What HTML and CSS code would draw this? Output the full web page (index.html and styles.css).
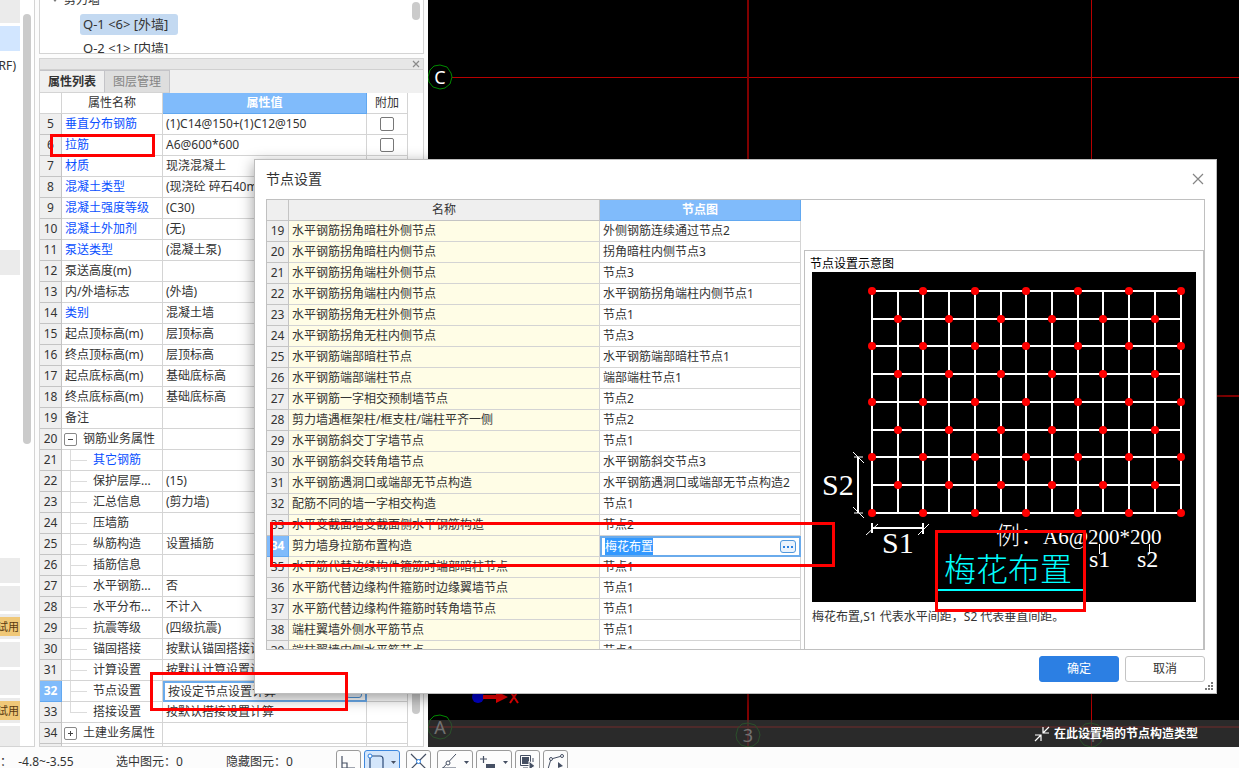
FILE: index.html
```
<!DOCTYPE html>
<html lang="zh-CN">
<head>
<meta charset="utf-8">
<title>节点设置</title>
<link rel="stylesheet" href="styles.css">
</head>
<body>
<div class="app">
  <main class="workspace">
    <aside class="strip">
      <div class="strip-list">
        <span class="block block-head"></span>
        <span class="block block-active"></span>
        <span class="strip-text">RF)</span>
        <span class="block block-mid"></span>
        <div class="strip-bottom">
          <span class="block"></span>
          <span class="block"></span>
          <span class="block"><b class="trial">试用</b></span>
          <span class="block"></span>
          <span class="block"></span>
          <span class="block"><b class="trial">试用</b></span>
          <span class="block"></span>
        </div>
      </div>
      <div class="thumb strip-thumb"></div>
    </aside>

    <section class="side">
      <div class="tree">
        <ul class="tree-list">
          <li class="tree-root"><span class="caret"></span>剪力墙</li>
          <li class="tree-leaf"><span class="chosen">Q-1 &lt;6&gt; [外墙]</span></li>
          <li class="tree-leaf"><span>Q-2 &lt;1&gt; [内墙]</span></li>
        </ul>
        <div class="thumb tree-thumb"></div>
      </div>
      <div class="props">
        <div class="props-bar">
          <button class="bar-close" type="button" aria-label="关闭"><svg width="8" height="8" viewBox="0 0 8 8"><path d="M1 1L7 7M7 1L1 7" stroke="#8a8a8a" stroke-width="1.2"/></svg></button>
        </div>
        <div class="tabs">
          <button class="tab tab-on" type="button">属性列表</button><button class="tab" type="button">图层管理</button>
        </div>
        <div class="grid-wrap">
          <table class="grid">
            <colgroup><col class="c-num"><col class="c-name"><col class="c-val"><col class="c-add"></colgroup>
            <thead><tr><th></th><th>属性名称</th><th class="hot">属性值</th><th>附加</th></tr></thead>
            <tbody id="props-body"></tbody>
          </table>
          <div class="thumb grid-thumb"></div>
        </div>
      </div>
    </section>

    <section class="canvas">
      <svg class="drawing" width="100%" height="100%">
        <g stroke-width="1" shape-rendering="crispEdges">
          <path stroke="#b80000" d="M663.500 0V747M24 77.500H1400"/>
          <path stroke="#800000" stroke-width="2" d="M320 0V747M0 396H1400M0 727H1400"/>
        </g>
        <g fill="none" stroke="#008a00" stroke-width="1">
          <path id="bubble" d="M12 65L19 67L23 73L24 77L22 84L17 88L12 89L5 87L1 82L0 77L2 70L6 66Z"/>
          <use href="#bubble" y="650"/>
          <use href="#bubble" x="308" y="658"/>
          <use href="#bubble" x="651" y="658"/>
        </g>
        <g class="axis" text-anchor="middle">
          <text x="12" y="84">C</text>
          <text x="12" y="734">A</text>
          <text x="320" y="742">3</text>
          <text x="663" y="742">4</text>
        </g>
        <circle cx="50" cy="697" r="6" fill="#0000c8"/>
        <path d="M55 695H68V691L80 697L68 703V699H55Z" fill="#f00000"/>
        <path d="M82 691L90 703M90 691L82 703" stroke="#f00000" stroke-width="2"/>
      </svg>
      <div class="hint">
        <svg width="16" height="16" viewBox="0 0 16 16" fill="none" stroke="#fff" stroke-width="1.200"><path d="M15 1L9 7M9 1V7H15M1 15L7 9M1 9H7V15"/></svg>
        <span>在此设置墙的节点构造类型</span>
      </div>
    </section>
  </main>

  <footer class="status">
    <span class="s-level">：&nbsp; -4.8~-3.55</span>
    <span class="s-sel">选中图元：0</span>
    <span class="s-hid">隐藏图元：0</span>
    <div class="tools">
      <div class="tool-group">
        <button type="button" class="tool" aria-label="正交"><svg width="23" height="24" viewBox="0 0 23 24"><path d="M5 5V17H18M5 12H10V17" fill="none" stroke="#454f63" stroke-width="1.200"/></svg></button>
        <button type="button" class="tool wide on" aria-label="捕捉"><svg width="34" height="24" viewBox="0 0 34 24"><path d="M5 7V18M7 5H15Q18 5 18 8V18" fill="none" stroke="#2b4a78" stroke-width="1.200"/><circle cx="5" cy="5" r="2" fill="#fff" stroke="#2a7fe0"/><path d="M26 10H31L28.500 13Z" fill="#454f63"/></svg></button>
      </div>
      <button type="button" class="tool" aria-label="交点"><svg width="23" height="24" viewBox="0 0 23 24"><path d="M4 3L19 18M19 3L4 18" stroke="#454f63" stroke-width="1.200"/><circle cx="11.500" cy="10.500" r="2" fill="#fff" stroke="#2a7fe0"/></svg></button>
      <div class="tool-group">
        <button type="button" class="tool wide" aria-label="角度"><svg width="34" height="24" viewBox="0 0 34 24"><path d="M4 18L18 3M4 17H18" stroke="#454f63"/><circle cx="10" cy="12" r="2" fill="#fff" stroke="#454f63"/><path d="M26 10H31L28.500 13Z" fill="#454f63"/></svg></button>
        <button type="button" class="tool wide" aria-label="偏移"><svg width="34" height="24" viewBox="0 0 34 24"><path d="M3 8H10M6.500 5V12" stroke="#454f63" stroke-width="1.200"/><path d="M9 13H18V18H9Z" fill="#454f63"/><path d="M26 10H31L28.500 13Z" fill="#454f63"/></svg></button>
        <button type="button" class="tool" aria-label="选择"><svg width="23" height="24" viewBox="0 0 23 24"><path d="M4.500 4.500H14.500V14.500H4.500Z" fill="none" stroke="#454f63"/><path d="M6 6H13V13H6Z" fill="#454f63"/><path d="M7 17H12M17 7V11" fill="none" stroke="#454f63"/><path d="M13 10L19 15L13 19Z" fill="#454f63" stroke="#fff"/></svg></button>
        <button type="button" class="tool" aria-label="折线"><svg width="23" height="24" viewBox="0 0 23 24"><path d="M4 18L7 8L18 5" fill="none" stroke="#454f63"/><circle cx="7" cy="8" r="1.500" fill="#fff" stroke="#454f63"/><circle cx="18" cy="5" r="1.500" fill="#fff" stroke="#454f63"/><path d="M14 11L19 15L14 17Z" fill="#454f63"/></svg></button>
      </div>
    </div>
  </footer>
</div>

<div class="dialog" role="dialog" aria-labelledby="dlg-title">
  <header class="dlg-head">
    <h1 id="dlg-title">节点设置</h1>
    <button class="dlg-close" type="button" aria-label="关闭"><svg width="12" height="12" viewBox="0 0 12 12"><path d="M1 1L11 11M11 1L1 11" stroke="#858585" stroke-width="1.200"/></svg></button>
  </header>
  <div class="dlg-body">
    <div class="node-wrap">
      <table class="grid nodes">
        <colgroup><col class="c-num"><col class="n-name"><col class="n-val"></colgroup>
        <thead><tr><th></th><th>名称</th><th class="hot">节点图</th></tr></thead>
        <tbody id="nodes-body"></tbody>
      </table>
    </div>
    <div class="preview">
      <figure class="figure">
        <figcaption>节点设置示意图</figcaption>
        <svg class="plan" id="plan" width="384" height="330" viewBox="0 0 384 330">
          <rect width="384" height="330" fill="#000"/>
          <g id="plan-grid" stroke="#fff" stroke-width="2"></g>
          <g id="plan-dots" fill="#f00"></g>
          <g stroke="#fff" fill="none">
            <path d="M46 185V241M60 256H112M60 251V261M111 251V262" stroke-width="2"/>
            <path d="M41 180L52 191M42 185H51M41 235L52 246M42 241H51M54 263L66 252M106 263L117 252M287.500 272V282M337.500 272V282"/>
          </g>
          <g class="cad" fill="#fff">
            <text class="cad-l" x="10" y="223">S2</text>
            <text class="cad-l" x="70" y="281">S1</text>
            <text class="cad-m" x="184" y="272">例：</text>
            <text class="cad-s" x="231" y="272">A6@200*200</text>
            <text class="cad-m" x="277" y="295">s1</text>
            <text class="cad-m" x="325" y="295">s2</text>
          </g>
          <text class="cad-title" x="132" y="309" fill="#0ff">梅花布置</text>
          <path d="M124 318H272" stroke="#0ff" stroke-width="2"/>
        </svg>
        <p class="note">梅花布置,S1 代表水平间距，S2 代表垂直间距。</p>
      </figure>
    </div>
  </div>
  <footer class="dlg-foot">
    <button class="btn primary" type="button">确定</button>
    <button class="btn" type="button">取消</button>
  </footer>
  <svg class="grip" width="8" height="8" viewBox="0 0 8 8" fill="#777"><path d="M6 0h2v2h-2zM3 3h2v2h-2zM6 3h2v2h-2zM0 6h2v2h-2zM3 6h2v2h-2zM6 6h2v2h-2z"/></svg>
</div>

<div class="mark mark-name"></div>
<div class="mark mark-value"></div>
<div class="mark mark-node"></div>
<div class="mark mark-title"></div>
<script src="app.js"></script>
</body>
</html>
```

FILE: styles.css
```
* { box-sizing: border-box; }

html, body { height: 100%; }

body {
  margin: 0;
  overflow: hidden;
  position: relative;
  background: #fcfcfc;
  color: #333;
  font: 12px/20px "Noto Sans", "Noto Sans CJK SC", sans-serif;
}

button, input { font: inherit; color: inherit; }

.app { display: flex; flex-direction: column; height: 100%; }
.workspace { flex: 1; min-height: 0; display: flex; gap: 4px; }

/* left strip */
.strip {
  width: 35px;
  display: flex;
  gap: 3px;
  background: #fff;
  border-right: 1px solid #d4d4d4;
  border-bottom: 1px solid #d4d4d4;
}
.strip-list { width: 20px; display: flex; flex-direction: column; overflow: hidden; }
.block { flex: none; display: flex; align-items: center; justify-content: flex-end; height: 25px; background: #ebebeb; }
.block-head { height: 23px; margin-bottom: 3px; }
.block-active { background: #d2e6ff; }
.strip-text { margin-top: 5px; width: 16px; height: 20px; display: flex; justify-content: flex-end; }
.block-mid { margin-top: 174px; }
.strip-bottom { margin-top: auto; height: 188px; flex: none; display: flex; flex-direction: column; gap: 3px; overflow: hidden; }
.trial { flex: none; padding-right: 1px; background: #f0c878; color: #5a3a10; font-size: 11px; font-weight: 400; line-height: 19px; }
.thumb { background: #cbcbcb; border-radius: 4px; }
.strip-thumb { width: 8px; height: 430px; margin-top: 14px; }

/* side panels */
.side { width: 385px; display: flex; flex-direction: column; gap: 4px; }
.tree {
  flex: none;
  height: 54px;
  display: flex;
  align-items: flex-start;
  justify-content: space-between;
  overflow: hidden;
  background: #fff;
  border: 1px solid #d4d4d4;
  border-top: 0;
}
.tree-list { list-style: none; margin: -12px 0 0; padding: 0; line-height: 24px; }
.tree-root { display: flex; align-items: center; gap: 6px; padding-left: 12px; }
.caret { border: 3px solid transparent; border-top: 4px solid #777; border-bottom: 0; }
.tree-leaf { padding-left: 40px; height: 24px; display: flex; align-items: center; font-size: 13px; }
.tree-leaf span { padding: 0 10px 0 3px; line-height: 21px; border-radius: 3px; }
.tree-leaf .chosen { background: #c3d9f1; }
.tree-thumb { width: 8px; height: 18px; margin: 2px 3px 0 0; }

.props { flex: 1; min-height: 0; display: flex; flex-direction: column; background: #fff; border: 1px solid #d4d4d4; }
.props-bar { flex: none; height: 11px; background: #e7e7e7; border-bottom: 1px solid #d0d0d0; display: flex; align-items: center; justify-content: flex-end; padding-right: 3px; }
.bar-close { display: flex; border: 0; padding: 0; background: none; }
.tabs { flex: none; height: 23px; display: flex; background: #f0f0f0; }
.tab { width: 65px; padding: 0; border: 1px solid #c4c4c8; border-left: 0; border-bottom-color: #d4d4d4; background: #dedede; color: #858585; line-height: 20px; }
.tab-on { background: #f0f0f0; color: #333; font-weight: 700; }

.grid-wrap { flex: 1; min-height: 0; overflow: hidden; display: flex; align-items: flex-start; gap: 4px; }
.grid { flex: none; table-layout: fixed; border-collapse: separate; border-spacing: 0; width: 368px; }
.c-num { width: 22px; }
.c-name { width: 101px; }
.c-val { width: 204px; }
.c-add { width: 41px; }
.grid th, .grid td {
  height: 21px;
  padding: 0 0 0 3px;
  border-right: 1px solid #d4d4d4;
  border-bottom: 1px solid #d4d4d4;
  line-height: 20px;
  text-align: left;
  font-weight: 400;
  white-space: nowrap;
  overflow: hidden;
}
.grid thead th { padding: 0; text-align: center; }
.grid thead .hot { background: #80bbfb; color: #fff; font-weight: 700; border-color: #62a8f0; }
.grid .num { padding: 0; background: #efefef; text-align: center; border-color: #c4c4c4; }
.grid .num-on { background: #80bbfb; color: #fff; font-weight: 700; border-color: #62a8f0; }
.grid .link { color: #0a50ff; }
.grid .add { padding: 0; text-align: center; }
.add input { appearance: none; display: block; width: 14px; height: 14px; margin: 0 auto; border: 1px solid #777; border-radius: 2px; background: #fff; }
.grid .edit { padding: 0; border: 0; }
.cell-edit { display: flex; align-items: center; height: 21px; padding: 0 3px; border: 2px solid #6aabec; background: #fff; }
.cell-edit input { flex: 1; min-width: 0; height: 17px; border: 0; padding: 0; background: none; outline: 0; }
.cell-edit mark { margin-right: auto; background: #3399ff; color: #fff; line-height: 17px; }
.more { flex: none; display: flex; align-items: center; justify-content: center; width: 16px; height: 13px; padding: 0; border: 1px solid #4f97dc; border-radius: 3px; background: #eaf3fd; }
.node-cell { display: flex; align-items: center; height: 20px; }
.fold { display: flex; align-items: center; justify-content: center; width: 13px; height: 13px; margin-right: 6px; padding: 0; border: 1px solid #888; border-radius: 2px; background: #fff; }
.grid .fold-cell { padding: 0 0 0 2px; }
.grid .child { padding: 0; }
.branch { flex: none; width: 17px; height: 21px; margin: 0 6px 0 8px; border-left: 1px solid #dcdcdc; display: flex; align-items: center; }
.branch::before { content: ""; width: 16px; height: 1px; background: #dcdcdc; }
.branch-end { height: 11px; align-self: flex-start; align-items: flex-end; }
.grid-thumb { width: 8px; height: 200px; margin-top: 421px; }

/* drawing area */
.canvas { flex: 1; min-width: 0; position: relative; overflow: hidden; background: #000; }
.drawing { display: block; }
.axis { fill: #fff; font-size: 18px; }
.hint {
  position: absolute;
  left: 0;
  right: 0;
  bottom: 0;
  height: 27px;
  padding-right: 41px;
  display: flex;
  align-items: center;
  justify-content: flex-end;
  gap: 4px;
  background: rgba(58, 58, 58, .72);
  color: #fff;
  font-weight: 700;
}

/* status bar */
.status { flex: none; height: 21px; display: flex; align-items: flex-start; overflow: hidden; background: #fcfcfc; line-height: 30px; }
.s-level { width: 116px; }
.s-sel { width: 110px; }
.s-hid { width: 110px; }
.status span { flex: none; white-space: nowrap; }
.tools { display: flex; gap: 6px; padding-top: 3px; }
.tool-group { display: flex; gap: 3px; }
.tool { flex: none; display: flex; width: 25px; height: 26px; padding: 0; border: 1px solid #9a9a9a; border-radius: 3px; background: #fcfcfc; }
.tool.wide { width: 36px; }
.tool.on { border-color: #3d87dd; background: #d4e6fb; }

/* dialog */
.dialog {
  position: absolute;
  left: 254px;
  top: 159px;
  width: 963px;
  padding: 0 11px 11px;
  border: 1px solid #bdbdbd;
  background: #fff;
  box-shadow: 0 4px 14px rgba(0, 0, 0, .4);
}
.dlg-head { display: flex; align-items: center; justify-content: space-between; height: 39px; padding: 0 1px 2px 0; }
.dlg-head h1 { margin: 0; font-size: 14px; font-weight: 400; }
.dlg-close { display: flex; padding: 0; border: 0; background: none; }
.dlg-body { display: flex; gap: 3px; height: 451px; border: 1px solid #c0c0c0; }
.node-wrap { flex: none; overflow: hidden; }
.nodes { width: 534px; }
.n-name { width: 311px; }
.n-val { width: 201px; }
.nodes thead th { background: #efefef; border-color: #c4c4c4; }
.nodes .name { background: #fffde6; }
.preview { flex: 1; min-width: 0; display: flex; flex-direction: column; padding-top: 50px; }
.figure { flex: 1; margin: 0; padding: 3px 7px; border: 1px solid #c0c0c0; border-bottom: 0; }
.figure figcaption { margin-left: -2px; height: 18px; color: #000; }
.plan { display: block; }
.note { margin: 5px 0 0; }
.cad { font-family: "Liberation Serif", "Noto Sans CJK SC", serif; }
.cad-l { font-size: 30px; }
.cad-m { font-size: 24px; font-weight: 300; }
.cad-s { font-size: 21px; }
.cad-title { font: 300 32px "Noto Sans CJK SC", sans-serif; }
.dlg-foot { display: flex; justify-content: flex-end; gap: 6px; padding-top: 6px; }
.btn { width: 80px; height: 26px; padding: 0; border: 1px solid #c4c4c4; border-radius: 3px; background: #fff; }
.btn.primary { border-color: #2c7fe3; background: #2c7fe3; color: #fff; }
.grip { position: absolute; right: 3px; bottom: 3px; }

/* highlight frames */
.mark { position: absolute; border: 3px solid #f00; pointer-events: none; }
.mark-name { left: 50px; top: 134px; width: 105px; height: 23px; }
.mark-value { left: 150px; top: 672px; width: 198px; height: 39px; }
.mark-node { left: 270px; top: 522px; width: 565px; height: 45px; }
.mark-title { left: 935px; top: 530px; width: 151px; height: 82px; }
```

FILE: app.js
```
const props = [
  [5, "垂直分布钢筋", "(1)C14@150+(1)C12@150", "link", true],
  [6, "拉筋", "A6@600*600", "link", true],
  [7, "材质", "现浇混凝土", "link"],
  [8, "混凝土类型", "(现浇砼 碎石40mm)", "link"],
  [9, "混凝土强度等级", "(C30)", "link"],
  [10, "混凝土外加剂", "(无)", "link"],
  [11, "泵送类型", "(混凝土泵)", "link"],
  [12, "泵送高度(m)", ""],
  [13, "内/外墙标志", "(外墙)"],
  [14, "类别", "混凝土墙", "link"],
  [15, "起点顶标高(m)", "层顶标高"],
  [16, "终点顶标高(m)", "层顶标高"],
  [17, "起点底标高(m)", "基础底标高"],
  [18, "终点底标高(m)", "基础底标高"],
  [19, "备注", ""],
  [20, "钢筋业务属性", "", "minus"],
  [21, "其它钢筋", "", "child link"],
  [22, "保护层厚...", "(15)", "child"],
  [23, "汇总信息", "(剪力墙)", "child"],
  [24, "压墙筋", "", "child"],
  [25, "纵筋构造", "设置插筋", "child"],
  [26, "插筋信息", "", "child"],
  [27, "水平钢筋...", "否", "child"],
  [28, "水平分布...", "不计入", "child"],
  [29, "抗震等级", "(四级抗震)", "child"],
  [30, "锚固搭接", "按默认锚固搭接计算", "child"],
  [31, "计算设置", "按默认计算设置计算", "child"],
  [32, "节点设置", "按设定节点设置计算", "child edit"],
  [33, "搭接设置", "按默认搭接设置计算", "child last"],
  [34, "土建业务属性", "", "plus"]
];

const nodes = [
  ["水平钢筋拐角暗柱外侧节点", "外侧钢筋连续通过节点2"],
  ["水平钢筋拐角暗柱内侧节点", "拐角暗柱内侧节点3"],
  ["水平钢筋拐角端柱外侧节点", "节点3"],
  ["水平钢筋拐角端柱内侧节点", "水平钢筋拐角端柱内侧节点1"],
  ["水平钢筋拐角无柱外侧节点", "节点1"],
  ["水平钢筋拐角无柱内侧节点", "节点3"],
  ["水平钢筋端部暗柱节点", "水平钢筋端部暗柱节点1"],
  ["水平钢筋端部端柱节点", "端部端柱节点1"],
  ["水平钢筋一字相交预制墙节点", "节点2"],
  ["剪力墙遇框架柱/框支柱/端柱平齐一侧", "节点2"],
  ["水平钢筋斜交丁字墙节点", "节点1"],
  ["水平钢筋斜交转角墙节点", "水平钢筋斜交节点3"],
  ["水平钢筋遇洞口或端部无节点构造", "水平钢筋遇洞口或端部无节点构造2"],
  ["配筋不同的墙一字相交构造", "节点1"],
  ["水平变截面墙变截面侧水平钢筋构造", "节点2"],
  ["剪力墙身拉筋布置构造", "梅花布置"],
  ["水平筋代替边缘构件箍筋时端部暗柱节点", "节点1"],
  ["水平筋代替边缘构件箍筋时边缘翼墙节点", "节点1"],
  ["水平筋代替边缘构件箍筋时转角墙节点", "节点1"],
  ["端柱翼墙外侧水平筋节点", "节点1"],
  ["端柱翼墙内侧水平筋节点", "节点1"]
];

const more = '<button class="more" type="button" aria-label="更多"><svg width="10" height="2"><path d="M0 1h2M4 1h2M8 1h2" stroke="#2a7fe0" stroke-width="2"/></svg></button>';

document.getElementById("props-body").innerHTML = props.map(([n, name, value, kind = "", box]) => {
  const has = (k) => kind.split(" ").includes(k);
  let cls = has("link") ? "link" : "";
  let label = name;
  if (has("child")) {
    cls += " child";
    label = `<div class="node-cell"><i class="branch${has("last") ? " branch-end" : ""}"></i>${name}</div>`;
  } else if (has("minus") || has("plus")) {
    cls += " fold-cell";
    const d = has("plus") ? "M1 3.500H6M3.500 1V6" : "M1 3.500H6";
    label = `<div class="node-cell"><button class="fold" type="button" aria-label="折叠"><svg width="7" height="7"><path d="${d}" stroke="#444"/></svg></button>${name}</div>`;
  }
  const val = has("edit")
    ? `<td class="edit"><div class="cell-edit"><input aria-label="${name}" value="${value}">${more}</div></td>`
    : `<td>${value}</td>`;
  const check = box ? `<input type="checkbox" aria-label="附加 ${name}">` : "";
  return `<tr><td class="num${has("edit") ? " num-on" : ""}">${n}</td><td class="${cls}">${label}</td>${val}<td class="add">${check}</td></tr>`;
}).join("") + '<tr><td class="num"></td><td></td><td></td><td></td></tr>';

document.getElementById("nodes-body").innerHTML = nodes.map(([name, value], i) => {
  const on = i === 15;
  const val = on
    ? `<td class="edit"><div class="cell-edit"><mark>${value}</mark>${more}</div></td>`
    : `<td>${value}</td>`;
  return `<tr><td class="num${on ? " num-on" : ""}">${i + 19}</td><td class="name">${name}</td>${val}</tr>`;
}).join("");

const xs = [60, 86, 111, 137, 163, 189, 214, 240, 266, 291, 317, 343, 369];
const ys = [19, 47, 74, 102, 130, 158, 185, 213, 241];
document.getElementById("plan-grid").innerHTML =
  `<path d="${xs.map((x) => `M${x} 18V242`).join("")}${ys.map((y) => `M59 ${y}H370`).join("")}"/>`;
document.getElementById("plan-dots").innerHTML = ys.map((y, r) =>
  xs.filter((_, c) => c % 2 === r % 2).map((x) => `<circle cx="${x}" cy="${y}" r="4"/>`).join("")).join("");
```
